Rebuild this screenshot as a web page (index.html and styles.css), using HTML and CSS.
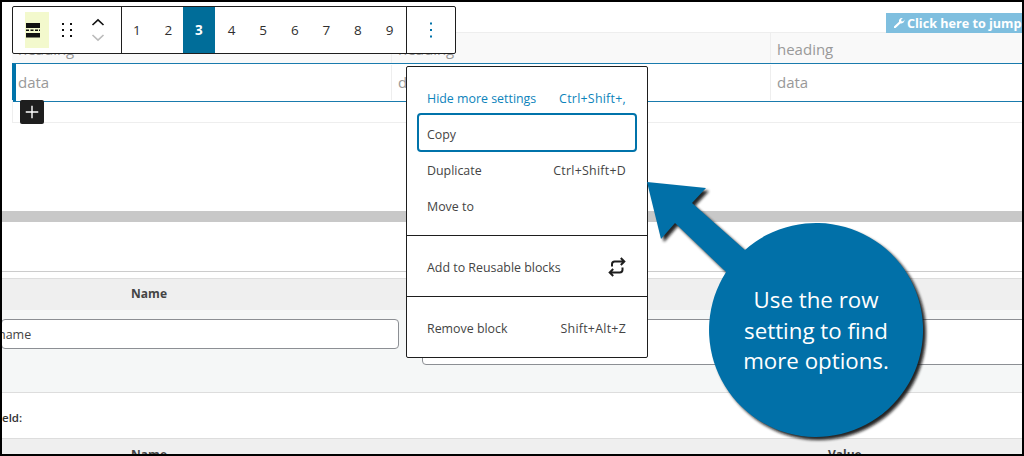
FILE: index.html
```html
<!DOCTYPE html>
<html lang="en">
<head>
<meta charset="utf-8">
<title>Table block row settings</title>
<link rel="stylesheet" href="styles.css">
</head>
<body>
<div class="frame">
  <section class="editor">
    <div class="jump-row"><span class="jump"><svg class="wrench" viewBox="0 0 12 12"><path d="M1 11 L1 9.400 L6 4.800 C5.600 3 6.800 1 9 1 L9.800 1.100 L8 3 L8.800 4.400 L10.400 4.200 L11.400 2.600 C11.800 5 10 7 7.400 6.400 L2.600 11 Z"/></svg>Click here to jump</span></div>
    <div class="tbl">
      <div class="row head"><div class="c c1">heading</div><div class="c c2">heading</div><div class="c c3">heading</div></div>
      <div class="row body"><div class="c c1">data</div><div class="c c2">data</div><div class="c c3">data</div></div>
      <div class="after"><span class="plus"><svg viewBox="0 0 24 24"><path d="M12 4.500v15M4.500 12h15"/></svg></span></div>
    </div>
  </section>
  <div class="band"></div>
  <section class="fields">
    <div class="gap"></div>
    <div class="thead"><div class="th th1">Name</div></div>
    <div class="tbody">
      <div class="input in1">name</div>
      <div class="input in2"></div>
    </div>
    <div class="label"><b>eld:</b></div>
    <div class="thead last"><div class="th th1">Name</div><div class="th th2">Value</div></div>
  </section>

  <div class="toolbar">
    <div class="tgroup g1">
      <span class="ticon sel"><svg viewBox="0 0 24 36"><path d="M1 11h14v5H1zM1 21h14v4.500H1z" fill="#111"/><path d="M1 18.200h3M5.500 18.200h3M10 18.200h3M14 18.200h1" stroke="#111" stroke-width="1.500" fill="none"/></svg></span>
      <span class="ticon drag"><svg viewBox="0 0 18 18"><path d="M5 2h2v2H5zM13 2h2v2h-2zM5 8h2v2H5zM13 8h2v2h-2zM5 14h2v2H5zM13 14h2v2h-2z" fill="#111"/></svg></span>
      <span class="mover"><svg viewBox="0 0 16 10"><path d="M2.500 8 L8 2.800 L13.500 8" fill="none" stroke="#111" stroke-width="1.600"/></svg><svg viewBox="0 0 16 10"><path d="M2.500 2 L8 7.200 L13.500 2" fill="none" stroke="#bbb" stroke-width="1.600"/></svg></span>
    </div>
    <div class="tgroup nums">
      <span class="n">1</span><span class="n">2</span><span class="n on">3</span><span class="n">4</span><span class="n">5</span><span class="n">6</span><span class="n">7</span><span class="n">8</span><span class="n">9</span>
    </div>
    <div class="tgroup more"><svg viewBox="0 0 4 20"><path d="M1 2.500h2v2H1zM1 9h2v2H1zM1 15.500h2v2H1z" fill="#0073aa"/></svg></div>
  </div>

  <div class="menu">
    <div class="msec">
      <div class="mi blue"><span>Hide more settings</span><span class="key">Ctrl+Shift+,</span></div>
      <div class="mi focus"><span>Copy</span></div>
      <div class="mi"><span>Duplicate</span><span class="key">Ctrl+Shift+D</span></div>
      <div class="mi"><span>Move to</span></div>
    </div>
    <div class="msec">
      <div class="mi"><span>Add to Reusable blocks</span><svg class="loop" viewBox="0 0 24 24"><path d="M7 11.500V9.200C7 7.700 8.200 6.500 9.700 6.500H19M15.800 3 L19.300 6.500 L15.800 10 M17.500 12.500V14.800C17.500 16.300 16.300 17.500 14.800 17.500H5M8.200 14 L4.700 17.500 L8.200 21" fill="none" stroke="#1e1e1e" stroke-width="2"/></svg></div>
    </div>
    <div class="msec">
      <div class="mi"><span>Remove block</span><span class="key">Shift+Alt+Z</span></div>
    </div>
  </div>

  <div class="callout">
    <svg class="bubble" viewBox="0 0 300 286">
      <defs><filter id="sh" x="-10%" y="-10%" width="125%" height="125%"><feGaussianBlur stdDeviation="1.500"/></filter></defs>
      <path transform="translate(3 3)" filter="url(#sh)" fill="#111" opacity=".9" d="M7 12 L66 18 L52 33 L104.940 80 A107 107 0 1 1 86.100 102 L35 53 L21 69 Z"/>
      <path fill="#0170a8" d="M7 12 L66 18 L52 33 L104.940 80 A107 107 0 1 1 86.100 102 L35 53 L21 69 Z"/>
    </svg>
    <p class="ctext">Use the row<br>setting to find<br>more options.</p>
  </div>
</div>
</body>
</html>
```
FILE: styles.css
```css
* { box-sizing: border-box; }
html, body { margin: 0; padding: 0; background: #fff; }
body { font-family: "Open Sans", sans-serif; }
.frame { position: relative; width: 1024px; height: 456px; border: 2px solid #000; overflow: hidden; background: #fff; }

.editor { height: 209px; padding-left: 10px; }
.jump-row { height: 30px; display: flex; justify-content: flex-end; align-items: flex-start; padding-top: 11px; }
.jump { display: inline-flex; align-items: center; height: 20px; width: 136px; padding-left: 7px; background: #7fbfdf; color: #fff; font-size: 12.600px; font-weight: 700; white-space: nowrap; overflow: hidden; }
.wrench { width: 12px; height: 12px; margin-right: 2px; fill: #fff; flex: none; }

.tbl { width: 1010px; }
.row { display: flex; }
.c { padding-left: 6px; color: #999; font-size: 15px; border-right: 1px solid #eee; }
.c1 { width: 380px; }
.c2 { width: 379px; }
.c3 { flex: 1; border-right: 0; }
.head { height: 31px; background: #f9f9f9; border-top: 1px solid #eee; line-height: 33px; }
.body { height: 39px; border-top: 1px solid #1a7bad; border-bottom: 1px solid #1a7bad; border-left: 4px solid #0073aa; }
.body .c { margin-top: 1px; margin-bottom: 1px; line-height: 35px; }
.body .c1 { width: 376px; padding-left: 2px; }
.after { height: 23px; border-bottom: 1px solid #eee; border-left: 1px solid #eee; padding-left: 7px; }
.plus { display: flex; width: 24px; height: 24px; background: #1e1e1e; border-radius: 2px; align-items: center; justify-content: center; margin-top: -2px; }
.plus svg { width: 20px; height: 20px; fill: none; stroke: #fff; stroke-width: 1.700; }

.band { height: 11px; background: #c8c8c8; }

.gap { height: 50px; border-bottom: 1px solid #ccc; }
.thead { height: 32px; margin-top: 6px; background: #efefef; border-top: 1px solid #ddd; display: flex; font-size: 12px; font-weight: 700; color: #444; line-height: 29px; }
.th1 { width: 165px; text-align: right; }
.th2 { margin-left: 661px; }
.tbody { height: 83px; background: #f5f7f7; border-bottom: 1px solid #ddd; display: flex; align-items: flex-start; gap: 23px; padding-top: 9px; }
.input { background: #fff; border: 1px solid #8c8f94; border-radius: 4px; font-size: 12.500px; color: #444; }
.in1 { width: 398px; height: 30px; margin-left: -1px; line-height: 29px; text-indent: -4px; overflow: hidden; }
.in2 { flex: 1; height: 46px; margin-right: -10px; }
.label { height: 45px; font-size: 11.500px; color: #333; line-height: 49px; }
.label b { font-weight: 600; }
.last { margin-top: 0; height: 17px; line-height: 31px; }

.toolbar { position: absolute; left: 10px; top: 4px; width: 444px; height: 48px; background: #fff; border: 1px solid #1e1e1e; border-radius: 2px; display: flex; }
.tgroup { display: flex; align-items: center; height: 100%; border-right: 1px solid #1e1e1e; }
.tgroup:last-child { border-right: 0; }
.g1 { width: 109px; padding-left: 12px; }
.ticon { display: flex; align-items: center; justify-content: center; }
.sel { width: 24px; height: 36px; background: #f3f9cd; }
.sel svg { width: 24px; height: 36px; }
.drag { width: 18px; height: 18px; margin-left: 8px; }
.drag svg { width: 18px; height: 18px; }
.mover { display: flex; flex-direction: column; margin-left: 15px; gap: 6px; }
.mover svg { width: 16px; height: 10px; display: block; }
.nums { width: 285px; }
.n { width: 31.600px; flex: none; height: 100%; display: flex; align-items: center; justify-content: center; font-size: 13.500px; color: #2f2f2f; }
.n:first-child { margin-left: -1px; }
.n.on { background: #006d99; color: #fff; font-weight: 700; margin-left: -1px; margin-right: 1px; }
.more { flex: 1; justify-content: center; }
.more svg { width: 4px; height: 20px; }

.menu { position: absolute; left: 404px; top: 64px; width: 242px; height: 292px; background: #fff; border: 1px solid #1e1e1e; border-radius: 2px; display: flex; flex-direction: column; font-size: 12.400px; color: #444; }
.msec { border-bottom: 1px solid #1e1e1e; }
.msec:first-child { height: 169px; padding: 15px 10px 0; }
.msec:nth-child(2) { height: 61px; padding: 2px 10px 0; display: flex; flex-direction: column; justify-content: center; }
.msec:last-child { border-bottom: 0; flex: 1; padding: 2px 10px 0; display: flex; flex-direction: column; justify-content: center; }
.mi { display: flex; justify-content: space-between; align-items: center; height: 36px; padding: 0 11px 0 10px; white-space: nowrap; }
.key { letter-spacing: .25px; }
.blue { color: #0c83bb; height: 32px; }
.focus { height: 39px; margin-top: -1px; border: 2px solid #0073aa; border-radius: 4px; padding: 4px 0 0 8px; }
.loop { width: 24px; height: 24px; margin-right: -3px; }

.callout { position: absolute; left: 638px; top: 168px; width: 300px; height: 286px; }
.bubble { width: 300px; height: 286px; display: block; }
.ctext { position: absolute; left: 69px; top: 115px; width: 214px; margin: 0; text-align: center; color: #fff; font-family: "Open Sans", sans-serif; font-size: 22.300px; line-height: 30.500px; }
```
